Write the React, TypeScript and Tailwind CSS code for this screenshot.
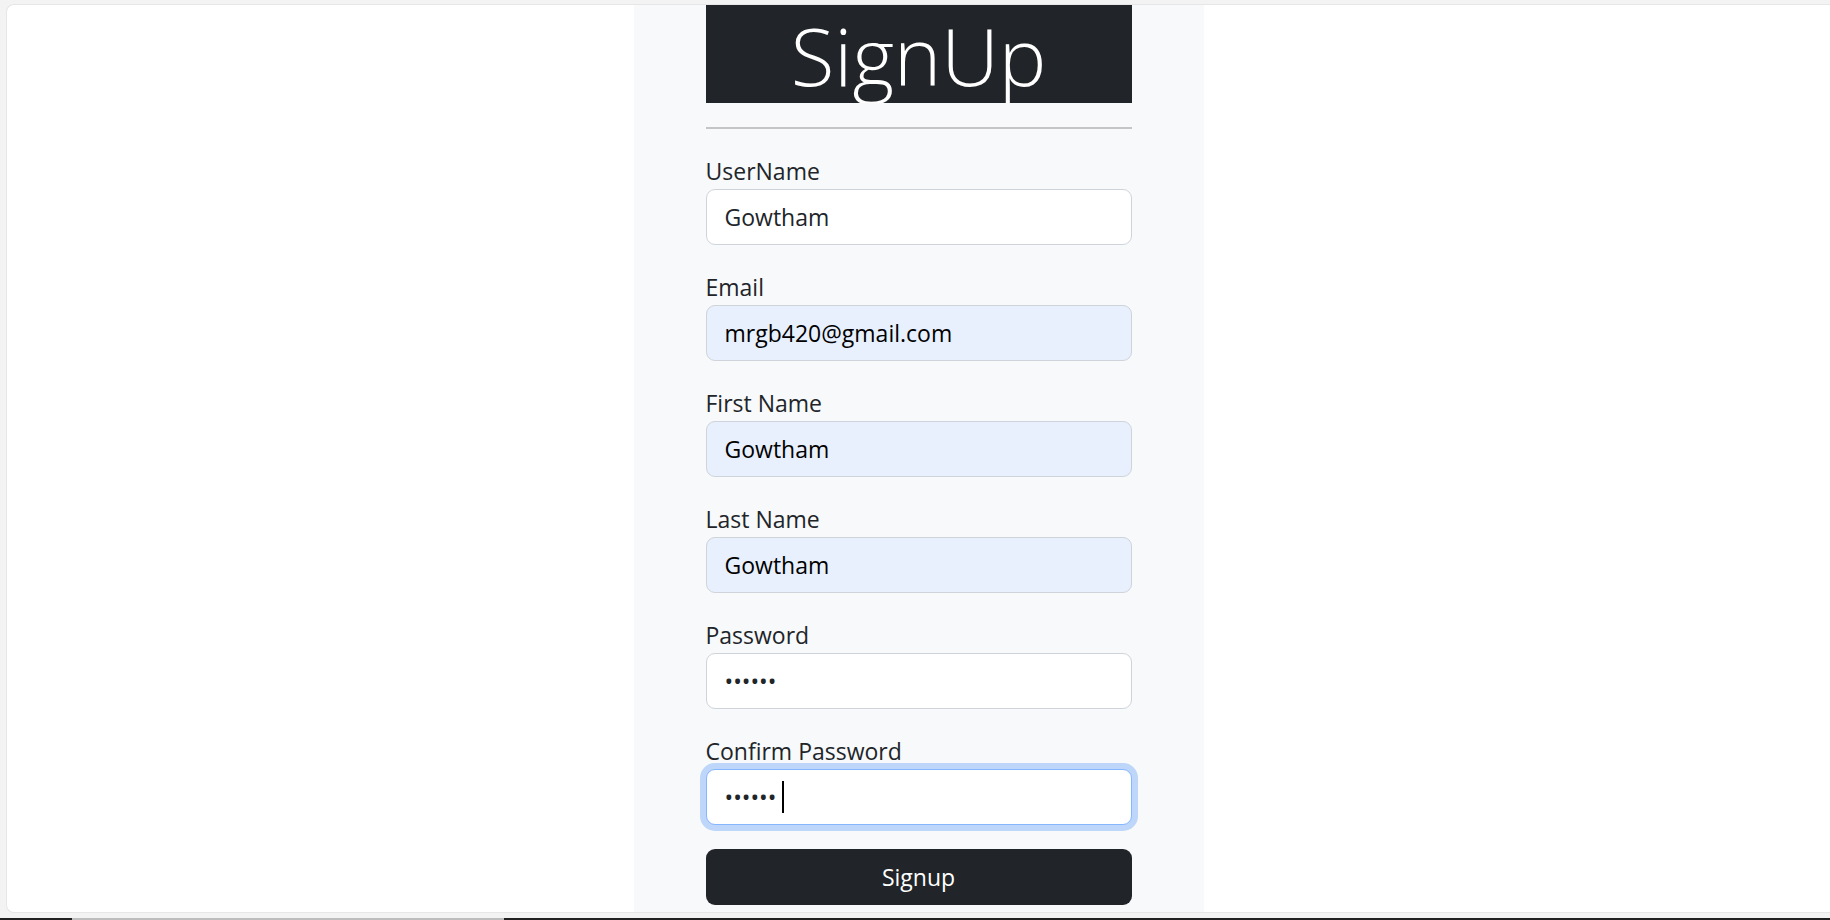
import React from 'react';

const Field = ({
  label,
  value,
  type = 'text',
  autofill = false,
}: {
  label: string;
  value: string;
  type?: string;
  autofill?: boolean;
}) => (
  <div className="mb-[24px]">
    <label className="block h-[36px] leading-[36px] text-[23px] text-[#212529]">{label}</label>
    <input
      type={type}
      value={value}
      readOnly
      className={`block w-full h-[56px] px-[18px] rounded-[9px] border border-[#ced4da] text-[23px] outline-none ${
        autofill ? 'bg-[#e8f0fe] text-black' : 'bg-white text-[#212529]'
      }`}
    />
  </div>
);

const App = () => {
  return (
    <div className="w-[1830px] h-[920px] bg-[#f3f3f3] flex flex-col overflow-hidden font-['Open_Sans',sans-serif]">
      <div className="flex-1 min-h-0 pt-[4px] pl-[6px] pb-[5px]">
        {/* page */}
        <div className="h-full bg-white rounded-l-[8px] border border-r-0 border-[#e6e6e6] flex justify-center overflow-hidden">
          <div className="w-[570px] h-full bg-[#f8f9fa] px-[72px]">
            <h1 className="h-[98px] bg-[#212529] text-white text-center text-[80px] font-light leading-[100px] overflow-hidden">
              SignUp
            </h1>
            <hr className="my-[24px] border-0 border-t-2 border-[#c4c5c6]" />

            <form>
              <Field label="UserName" value="Gowtham" />
              <Field label="Email" value="mrgb420@gmail.com" autofill />
              <Field label="First Name" value="Gowtham" autofill />
              <Field label="Last Name" value="Gowtham" autofill />
              <Field label="Password" value="gowtha" type="password" />

              <div className="mb-[24px]">
                <label className="block h-[36px] leading-[36px] text-[23px] text-[#212529]">Confirm Password</label>
                <div className="relative">
                  <input
                    type="password"
                    value="gowtha"
                    readOnly
                    className="block w-full h-[56px] px-[18px] rounded-[9px] border border-[#86b7fe] bg-white text-[23px] text-[#212529] outline-none shadow-[0_0_0_6px_rgba(13,110,253,0.25)]"
                  />
                  <span className="absolute left-[76px] top-[12px] w-[2px] h-[32px] bg-black" />
                </div>
              </div>

              <button
                type="button"
                className="block w-full h-[56px] rounded-[9px] bg-[#212529] text-white text-[23px]"
              >
                Signup
              </button>
            </form>
          </div>
        </div>
      </div>

      {/* taskbar edge */}
      <div className="h-[2px] flex">
        <div className="w-[72px] bg-[#202020]" />
        <div className="w-[432px] bg-[#bdbdbd]" />
        <div className="flex-1 bg-[#202020]" />
      </div>
    </div>
  );
};

export default App;
